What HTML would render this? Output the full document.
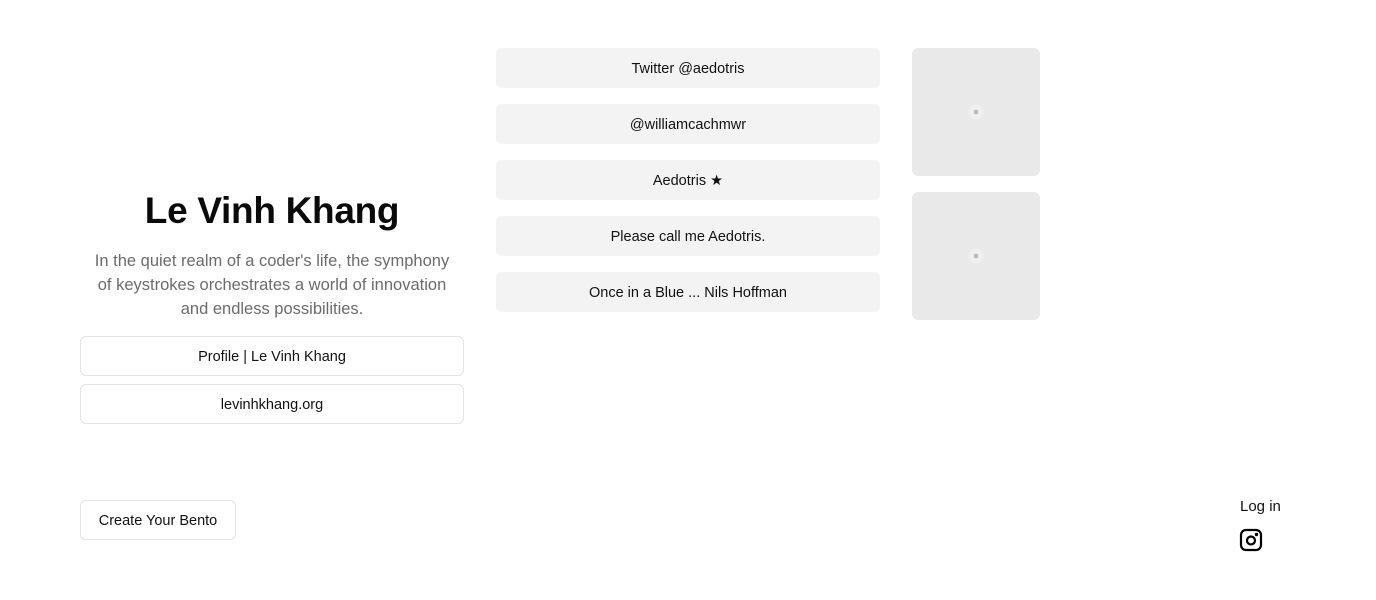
<!DOCTYPE html>
<html><head><meta charset="utf-8"><style>
*{box-sizing:border-box;margin:0;padding:0}
body{width:1376px;height:600px;background:#fff;font-family:"Liberation Sans",sans-serif;position:relative;overflow:hidden;color:#111}
.abs{position:absolute}
h1{position:absolute;left:80px;width:384px;top:190px;text-align:center;font-size:37px;font-weight:700;color:#0a0a0a;letter-spacing:-0.3px}
.desc{position:absolute;left:86px;width:372px;top:249px;text-align:center;font-size:16.5px;line-height:24px;color:#6b6b6b}
.lb{position:absolute;left:80px;width:384px;height:40px;border:1px solid #e3e3e3;border-radius:6px;display:flex;align-items:center;justify-content:center;font-size:14.5px;color:#111;padding-top:1px}
.gb{position:absolute;left:496px;width:384px;height:40px;background:#f3f3f3;border-radius:6px;display:flex;align-items:center;justify-content:center;font-size:14.5px;color:#111;padding-top:1px}
.img{position:absolute;left:912px;width:128px;height:128px;background:#e9e9e9;border-radius:6px}
.img::after{content:"";position:absolute;left:56px;top:56px;width:16px;height:16px;border-radius:50%;background:radial-gradient(circle,#bbb 0 2px,#f3f3f3 3px,#ececec 8px)}
.cb{position:absolute;left:80px;top:500px;width:156px;height:40px;border:1px solid #e3e3e3;border-radius:6px;display:flex;align-items:center;justify-content:center;font-size:14.5px;padding-top:1px}
</style></head><body>
<h1>Le Vinh Khang</h1>
<div class="desc">In the quiet realm of a coder's life, the symphony of keystrokes orchestrates a world of innovation and endless possibilities.</div>
<div class="lb" style="top:336px">Profile | Le Vinh Khang</div>
<div class="lb" style="top:384px">levinhkhang.org</div>
<div class="gb" style="top:48px">Twitter @aedotris</div>
<div class="gb" style="top:104px">@williamcachmwr</div>
<div class="gb" style="top:160px">Aedotris ★</div>
<div class="gb" style="top:216px">Please call me Aedotris.</div>
<div class="gb" style="top:272px">Once in a Blue ... Nils Hoffman</div>
<div class="img" style="top:48px"></div>
<div class="img" style="top:192px"></div>
<div class="cb">Create Your Bento</div>
<div class="abs" style="left:1240px;top:498px;font-size:15px">Log in</div>
<svg class="abs" style="left:1239px;top:528px" width="24" height="24" viewBox="0 0 24 24" fill="none" stroke="#000" stroke-width="2.2"><rect x="2" y="2" width="20" height="20" rx="5"/><circle cx="12" cy="12.5" r="4"/><circle cx="17.5" cy="6.5" r="0.6" fill="#000"/></svg>
</body></html>
